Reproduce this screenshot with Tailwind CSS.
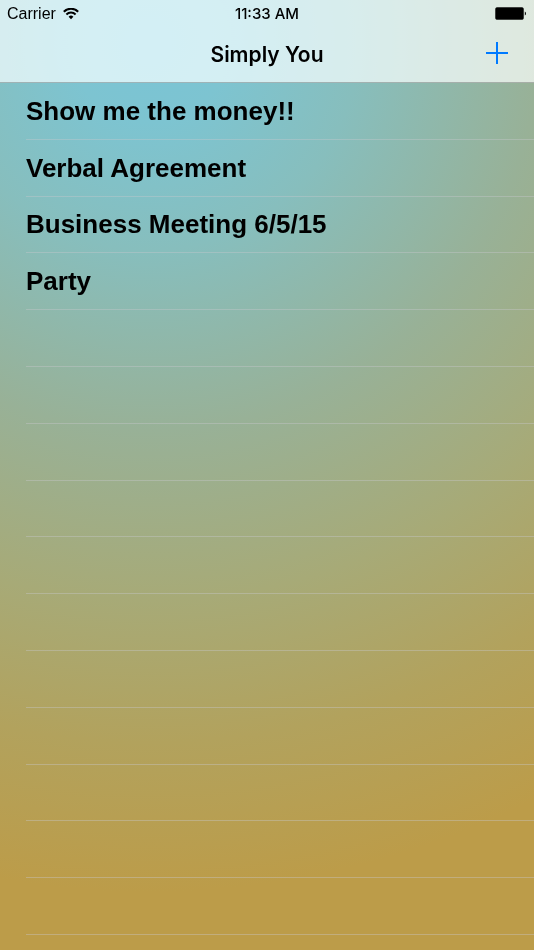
<!DOCTYPE html>
<html lang="en">

<head>
    <meta charset="UTF-8">
    <meta name="viewport" content="width=device-width, initial-scale=1.0">
    <title>Simply You</title>
    <script src="https://cdn.jsdelivr.net/npm/@tailwindcss/browser@4"></script>
</head>

<body class="min-h-screen flex flex-col text-black font-['Liberation_Sans',sans-serif] bg-no-repeat bg-[radial-gradient(circle_at_28%_42px,#7ac4d5_0px,#7dc4d1_80px,#87bebd_208px,#98b197_388px,#a7aa77_558px,#b2a25d_700px,#bc9c49_850px)]">
    <header class="bg-white/70 backdrop-saturate-125 border-b border-black/25">
        <!-- Status bar -->
        <div class="grid grid-cols-3 items-center h-7 px-[7px]">
            <div class="flex items-center gap-[7px]">
                <span class="text-[16px]">Carrier</span>
                <svg class="w-4 h-3" viewBox="0 0 16 12" fill="none" stroke="#000" stroke-width="2">
                    <path d="M0.8 3.7a10.2 10.2 0 0 1 14.4 0" />
                    <path d="M3.4 6.5a6.5 6.5 0 0 1 9.2 0" />
                    <path d="M8 11.3L5.6 8.8a3.4 3.4 0 0 1 4.8 0z" fill="#000" stroke="none" />
                </svg>
            </div>
            <span class="text-center text-[15px] font-medium font-['Inter',sans-serif]">11:33 AM</span>
            <svg class="justify-self-end w-8 h-3.5" viewBox="0 0 32 14">
                <rect x="0.5" y="0.5" width="28" height="12" rx="1.5" fill="#000" stroke="#000" stroke-opacity="0.45" />
                <path d="M29.8 4.5a2 2.2 0 0 1 0 4z" fill="#000" />
            </svg>
        </div>
        <!-- Navigation bar -->
        <div class="grid grid-cols-[1fr_auto_1fr] items-center h-[54px] px-[25px]">
            <h1 class="col-start-2 text-[21px] font-semibold font-['Inter',sans-serif]">Simply You</h1>
            <button type="button" aria-label="Add" class="justify-self-end pb-1">
                <svg class="block w-6 h-6" viewBox="0 0 24 24" stroke="#007aff" stroke-width="2">
                    <path d="M1 12h22M12 1v22" />
                </svg>
            </button>
        </div>
    </header>

    <ul class="flex-1 grid auto-rows-fr pl-[26px] pb-[15px] text-[26px] leading-[30px] font-bold">
        <li class="min-h-14 flex items-center border-b border-[#c8c7cc]/40">Show me the money!!</li>
        <li class="min-h-14 flex items-center border-b border-[#c8c7cc]/40">Verbal Agreement</li>
        <li class="min-h-14 flex items-center border-b border-[#c8c7cc]/40">Business Meeting 6/5/15</li>
        <li class="min-h-14 flex items-center border-b border-[#c8c7cc]/40">Party</li>
        <li class="min-h-14 border-b border-[#c8c7cc]/40"></li>
        <li class="min-h-14 border-b border-[#c8c7cc]/40"></li>
        <li class="min-h-14 border-b border-[#c8c7cc]/40"></li>
        <li class="min-h-14 border-b border-[#c8c7cc]/40"></li>
        <li class="min-h-14 border-b border-[#c8c7cc]/40"></li>
        <li class="min-h-14 border-b border-[#c8c7cc]/40"></li>
        <li class="min-h-14 border-b border-[#c8c7cc]/40"></li>
        <li class="min-h-14 border-b border-[#c8c7cc]/40"></li>
        <li class="min-h-14 border-b border-[#c8c7cc]/40"></li>
        <li class="min-h-14 border-b border-[#c8c7cc]/40"></li>
        <li class="min-h-14 border-b border-[#c8c7cc]/40"></li>
    </ul>
</body>

</html>
